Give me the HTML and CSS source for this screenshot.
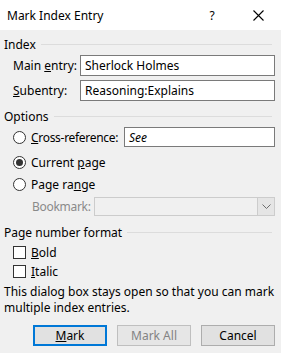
FILE: index.html
```html
<!DOCTYPE html>
<html lang="en">
<head>
    <meta charset="UTF-8">
    <title>Mark Index Entry</title>
    <link rel="stylesheet" href="styles.css">
</head>
<body>
    <div class="dialog">
        <div class="titlebar">
            <span class="title">Mark Index Entry</span>
            <span class="help">?</span>
            <span class="close">
                <svg width="11" height="11" viewBox="0 0 11 11"><path d="M0.5 0.5 L10.5 10.5 M10.5 0.5 L0.5 10.5" stroke="#000" stroke-width="1.1" fill="none"/></svg>
            </span>
        </div>
        <div class="content">
            <div class="group-head head-index"><span>Index</span><i class="rule"></i></div>
            <div class="field-row row-main">
                <span class="field-label">Main <u>e</u>ntry:</span>
                <div class="textbox">Sherlock Holmes</div>
            </div>
            <div class="field-row row-sub">
                <span class="field-label"><u>S</u>ubentry:</span>
                <div class="textbox">Reasoning:Explains</div>
            </div>

            <div class="group-head head-options"><span>Options</span><i class="rule"></i></div>
            <div class="option-row row-cross">
                <span class="radio"></span>
                <span class="option-label cross-label"><u>C</u>ross-reference:</span>
                <div class="textbox see-box"><em>See</em></div>
            </div>
            <div class="option-row row-current">
                <span class="radio checked"></span>
                <span class="option-label">Current <u>p</u>age</span>
            </div>
            <div class="option-row row-range">
                <span class="radio"></span>
                <span class="option-label">Page ra<u>n</u>ge</span>
            </div>
            <div class="option-row row-bookmark">
                <span class="bookmark-label">Bookmark:</span>
                <div class="combo">
                    <span class="combo-field"></span>
                    <span class="combo-btn">
                        <svg width="9" height="5" viewBox="0 0 9 5"><path d="M0.5 0.5 L4.5 4.5 L8.5 0.5" stroke="#6d6d6d" fill="none"/></svg>
                    </span>
                </div>
            </div>

            <div class="group-head head-format"><span>Page number format</span><i class="rule"></i></div>
            <div class="option-row row-bold">
                <span class="check"></span>
                <span class="option-label"><u>B</u>old</span>
            </div>
            <div class="option-row row-italic">
                <span class="check"></span>
                <span class="option-label"><u>I</u>talic</span>
            </div>

            <p class="note">This dialog box stays open so that you can mark multiple index entries.</p>

            <div class="buttons">
                <button class="btn default"><u>M</u>ark</button>
                <button class="btn disabled">Mark All</button>
                <button class="btn">Cancel</button>
            </div>
        </div>
    </div>
</body>
</html>
```

FILE: styles.css
```css
body, html {
    margin: 0;
    padding: 0;
    background: #f0f0f0;
    font-family: 'Noto Sans', sans-serif;
    font-size: 12px;
    color: #000;
}

.dialog {
    width: 281px;
    height: 353px;
    overflow: hidden;
}

.titlebar {
    height: 30px;
    background: #fff;
    display: flex;
    align-items: center;
    padding-left: 7px;
}

.title {
    flex: 1;
}

.help {
    width: 12px;
    margin-right: 35px;
    text-align: center;
}

.close {
    width: 11px;
    height: 11px;
    margin-right: 17px;
    display: flex;
}

.content {
    padding: 0 6px 0 4px;
}

.group-head {
    height: 16px;
    display: flex;
    align-items: center;
}

.group-head .rule {
    flex: 1;
    height: 1px;
    background: #dcdcdc;
    margin-left: 5px;
    margin-right: 3px;
}

.head-index { margin-top: 6px; }
.head-options { margin-top: 7px; }
.head-format { margin-top: 8px; }

.field-row {
    display: flex;
    align-items: center;
    height: 21px;
    padding-left: 9px;
}

.row-main { margin-top: 3px; }
.row-sub { margin-top: 4px; }

.field-label {
    width: 67px;
}

.textbox {
    flex: 1;
    height: 100%;
    box-sizing: border-box;
    border: 1px solid #7a7a7a;
    background: #fff;
    padding-left: 4px;
    display: flex;
    align-items: center;
}

.option-row {
    display: flex;
    align-items: center;
    height: 16px;
    padding-left: 9px;
}

.row-cross { margin-top: 3px; height: 20px; }
.row-current { margin-top: 7px; }
.row-range { margin-top: 6px; }
.row-bookmark { margin-top: 5px; height: 19px; }
.row-bold { margin-top: 4px; }
.row-italic { margin-top: 3px; }

.radio {
    width: 13px;
    height: 13px;
    box-sizing: border-box;
    border: 1px solid #333;
    border-radius: 50%;
    background: #fff;
    margin-right: 5px;
    position: relative;
}

.radio.checked::after {
    content: '';
    position: absolute;
    left: 2px;
    top: 2px;
    width: 7px;
    height: 7px;
    border-radius: 50%;
    background: #333;
}

.check {
    width: 13px;
    height: 13px;
    box-sizing: border-box;
    border: 1px solid #333;
    background: #fff;
    margin-right: 5px;
}

.cross-label {
    width: 93px;
    letter-spacing: -0.3px;
}

.see-box em {
    font-style: italic;
}

.bookmark-label {
    color: #8a8a8a;
    width: 81px;
    box-sizing: border-box;
    padding-left: 19px;
    letter-spacing: -0.3px;
}

.combo {
    flex: 1;
    height: 100%;
    display: flex;
    box-sizing: border-box;
    border: 1px solid #cccccc;
    background: #f0f0f0;
}

.combo-field {
    flex: 1;
}

.combo-btn {
    width: 16px;
    border-left: 1px solid #cccccc;
    background: #e5e5e5;
    display: flex;
    align-items: center;
    justify-content: center;
}

.note {
    margin: 5px 0 0 0;
    line-height: 16px;
}

.buttons {
    display: flex;
    justify-content: flex-end;
    gap: 10px;
    margin-top: 9px;
}

.btn {
    width: 74px;
    height: 21px;
    box-sizing: border-box;
    border: 1px solid #adadad;
    background: #e1e1e1;
    font-family: 'Noto Sans', sans-serif;
    font-size: 12px;
    color: #000;
    padding: 0;
}

.btn.default {
    border: 2px solid #0078d7;
}

.btn.disabled {
    border-color: #bfbfbf;
    background: #e6e6e6;
    color: #838383;
}
```
